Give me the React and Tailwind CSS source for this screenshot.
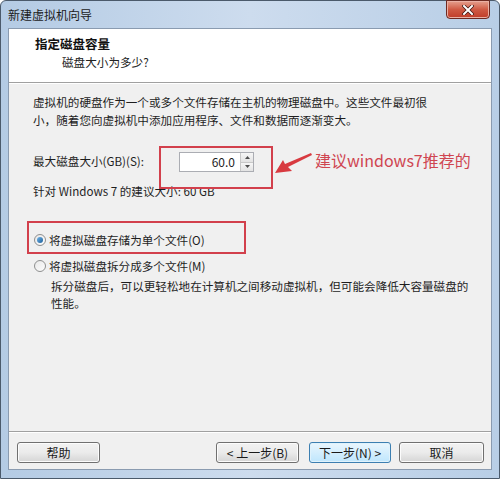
import React from "react";

const FONT = { fontFamily: '"Noto Sans CJK SC", "Liberation Sans", sans-serif' };

function Radio({ checked }) {
  return (
    <span className="relative inline-flex h-[12px] w-[12px] shrink-0 items-center justify-center rounded-full border border-[#8e8f8f] bg-gradient-to-br from-[#e8e8e8] to-[#fdfdfd]">
      {checked && (
        <span className="h-[6px] w-[6px] rounded-full bg-gradient-to-br from-[#6fb4e8] to-[#1b5f9a]" />
      )}
    </span>
  );
}

function Btn({ children, primary }) {
  return (
    <div
      className={
        "flex h-[21px] items-center justify-center rounded-[3px] border text-[12px] text-[#1a1a1a] " +
        (primary
          ? "border-[#3c7fb1] bg-gradient-to-b from-[#eaf6fd] to-[#bee6fd] shadow-[inset_0_0_0_1px_#dff2fc]"
          : "border-[#707070] bg-gradient-to-b from-[#f2f2f2] via-[#ebebeb] to-[#d5d5d5] shadow-[inset_0_0_0_1px_#fcfcfc]")
      }
    >
      {children}
    </div>
  );
}

export default function App() {
  return (
    <div className="relative h-[479px] w-[500px] overflow-hidden bg-white" style={FONT}>
      <div className="flex h-full w-full flex-col rounded-t-[6px] border border-[#4b5a6b] bg-gradient-to-r from-[#b4cbe4] via-[#cddcee] to-[#b8cee6]">
        {/* title bar */}
        <div className="relative flex h-[27px] shrink-0 items-center pl-[7px] text-[12px] text-[#1b1b1b]">
          <span>新建虚拟机向导</span>
          <div className="absolute right-[9px] top-[-1px] flex h-[19px] w-[44px] items-center justify-center rounded-b-[4px] border border-[#6e2a22] bg-gradient-to-b from-[#e5a08f] via-[#cf5a44] to-[#c03c28] shadow-[inset_0_0_0_1px_#eab0a4]">
            <svg width="12" height="10" viewBox="0 0 12 10">
              <path d="M2 1 L10 9 M10 1 L2 9" stroke="#3a1410" strokeWidth="3.4" strokeLinecap="square" />
              <path d="M2 1 L10 9 M10 1 L2 9" stroke="#ffffff" strokeWidth="2" strokeLinecap="square" />
            </svg>
          </div>
        </div>

        {/* client area */}
        <div className="mx-[7px] flex flex-1 flex-col border border-[#8a9bb0] bg-[#f0f0f0]">
          {/* header */}
          <div className="h-[54px] shrink-0 border-b border-[#a0a0a0] bg-white pl-[26px] pt-[6px]">
            <div className="text-[12.5px] font-bold leading-[18px] text-[#111]">指定磁盘容量</div>
            <div className="pl-[27px] text-[11.6px] leading-[18px] text-[#222]">磁盘大小为多少?</div>
          </div>
          <div className="h-px bg-white" />

          {/* body */}
          <div className="flex flex-1 flex-col whitespace-nowrap pl-[24px] pr-[10px] pt-[9px] text-[11.6px] text-[#1e1e1e]">
            <p className="leading-[18px]">
              虚拟机的硬盘作为一个或多个文件存储在主机的物理磁盘中。这些文件最初很
              <br />
              小，随着您向虚拟机中添加应用程序、文件和数据而逐渐变大。
            </p>

            <div className="mt-[23px] flex h-[20px] items-center">
              <span className="w-[146px]">最大磁盘大小(GB)(S):</span>
              <div className="flex h-[20px] w-[75px] border border-[#abadb3] bg-white">
                <div className="flex flex-1 items-center justify-end pr-[5px] text-[12px]">60.0</div>
                <div className="flex w-[13px] flex-col border-l border-[#c8c8c8]">
                  <div className="flex flex-1 items-center justify-center border-b border-[#c8c8c8] bg-gradient-to-b from-[#f6f6f6] to-[#e3e3e3]">
                    <svg width="5" height="3" viewBox="0 0 5 3"><path d="M0 3 L2.5 0 L5 3Z" fill="#4d4d4d" /></svg>
                  </div>
                  <div className="flex flex-1 items-center justify-center bg-gradient-to-b from-[#f6f6f6] to-[#e3e3e3]">
                    <svg width="5" height="3" viewBox="0 0 5 3"><path d="M0 0 L2.5 3 L5 0Z" fill="#4d4d4d" /></svg>
                  </div>
                </div>
              </div>
            </div>

            <div className="mt-[10px] leading-[18px]">针对 Windows 7 的建议大小: 60 GB</div>

            <div className="mt-[31px] flex items-center gap-[3px] pl-[1px]">
              <Radio checked />
              <span className="leading-[18px]">将虚拟磁盘存储为单个文件(O)</span>
            </div>
            <div className="mt-[8px] flex items-center gap-[3px] pl-[1px]">
              <Radio />
              <span className="leading-[18px]">将虚拟磁盘拆分成多个文件(M)</span>
            </div>
            <p className="mt-[3px] pl-[18px] leading-[17px]">
              拆分磁盘后，可以更轻松地在计算机之间移动虚拟机，但可能会降低大容量磁盘的
              <br />
              性能。
            </p>
          </div>

          {/* footer */}
          <div className="h-px bg-[#a0a0a0]" />
          <div className="h-px bg-white" />
          <div className="flex h-[36px] shrink-0 items-start pl-[8px] pr-[7px] pt-[9px]">
            <div className="w-[83px]"><Btn>帮助</Btn></div>
            <div className="flex-1" />
            <div className="w-[83px]"><Btn>&lt; 上一步(B)</Btn></div>
            <div className="ml-[10px] w-[82px]"><Btn primary>下一步(N) &gt;</Btn></div>
            <div className="ml-[8px] w-[85px]"><Btn>取消</Btn></div>
          </div>
        </div>
        <div className="h-[8px] shrink-0" />
      </div>

      {/* red annotations */}
      <div className="absolute left-[159px] top-[146px] h-[43px] w-[114px] border-2 border-[#d2404c]" />
      <div className="absolute left-[27px] top-[221px] h-[33px] w-[219px] border-2 border-[#d2404c]" />
      <svg className="absolute left-[274px] top-[150px]" width="40" height="26" viewBox="0 0 40 26">
        <path d="M1 23 L9 10 L11 14 L37 3 L38 5 L14 17 L18 21 Z" fill="#d83a40" />
      </svg>
      <div className="absolute left-[315px] top-[149px] text-[16px] leading-[22px] text-[#cf4550]">
        建议windows7推荐的
      </div>
    </div>
  );
}
